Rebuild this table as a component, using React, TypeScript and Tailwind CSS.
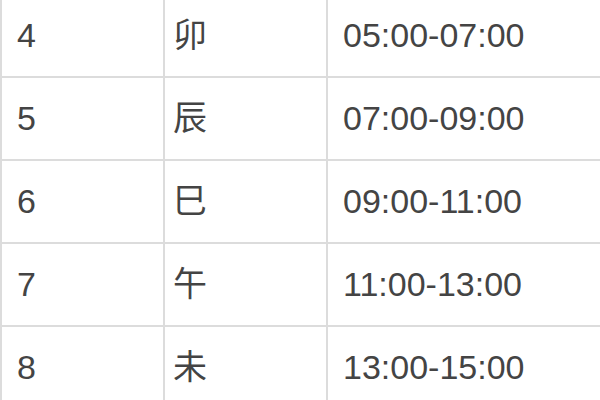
const rows = [
  { no: "4", branch: "卯", time: "05:00-07:00" },
  { no: "5", branch: "辰", time: "07:00-09:00" },
  { no: "6", branch: "巳", time: "09:00-11:00" },
  { no: "7", branch: "午", time: "11:00-13:00" },
  { no: "8", branch: "未", time: "13:00-15:00" },
];

export default function App() {
  return (
    <div className="w-[600px] h-[400px] overflow-hidden bg-white">
      <div
        className="-mt-[5px] flex flex-col text-[34px] text-[#444444]"
        style={{ fontFamily: '"Liberation Sans", "Noto Sans CJK SC", sans-serif' }}
      >
        {rows.map((row) => (
          <div
            key={row.no}
            className="grid grid-cols-[163px_163px_1fr] h-[83px] border-b-2 border-l-2 border-[#dcdcdc]"
          >
            <div className="flex items-center pl-[15px] border-r-2 border-[#dcdcdc]">{row.no}</div>
            <div className="flex items-center pl-[8px] border-r-2 border-[#dcdcdc]">{row.branch}</div>
            <div className="flex items-center pl-[15px]">{row.time}</div>
          </div>
        ))}
      </div>
    </div>
  );
}
